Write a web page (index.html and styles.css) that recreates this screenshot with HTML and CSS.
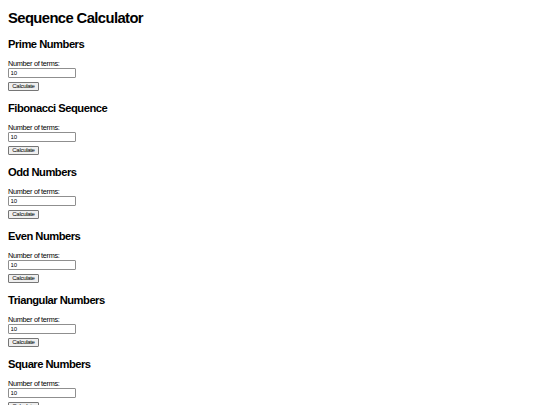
FILE: index.html
```html
<!DOCTYPE html>
<html lang="en">
<head>
<meta charset="utf-8">
<title>Sequence Calculator</title>
<link rel="stylesheet" href="styles.css">
</head>
<body>
<h1 class="title">Sequence Calculator</h1>
<div class="section">
  <h2 class="heading">Prime Numbers</h2>
  <label class="label">Number of terms:</label>
  <input class="field" type="number" value="10">
  <button class="btn">Calculate</button>
</div>
<div class="section">
  <h2 class="heading">Fibonacci Sequence</h2>
  <label class="label">Number of terms:</label>
  <input class="field" type="number" value="10">
  <button class="btn">Calculate</button>
</div>
<div class="section">
  <h2 class="heading">Odd Numbers</h2>
  <label class="label">Number of terms:</label>
  <input class="field" type="number" value="10">
  <button class="btn">Calculate</button>
</div>
<div class="section">
  <h2 class="heading">Even Numbers</h2>
  <label class="label">Number of terms:</label>
  <input class="field" type="number" value="10">
  <button class="btn">Calculate</button>
</div>
<div class="section">
  <h2 class="heading">Triangular Numbers</h2>
  <label class="label">Number of terms:</label>
  <input class="field" type="number" value="10">
  <button class="btn">Calculate</button>
</div>
<div class="section">
  <h2 class="heading">Square Numbers</h2>
  <label class="label">Number of terms:</label>
  <input class="field" type="number" value="10">
  <button class="btn">Calculate</button>
</div>
</body>
</html>
```
FILE: styles.css
```css
html, body {
  margin: 0;
  padding: 0;
  background: #fff;
}
body {
  padding: 0 8px;
  font-family: "Liberation Sans", Arial, sans-serif;
  color: #000;
  overflow: hidden;
}
.title {
  font-size: 14.8px;
  font-weight: bold;
  line-height: 16.5px;
  letter-spacing: -0.6px;
  margin: 10px 0 11.3px;
}
.section {
  display: block;
}
.heading {
  font-size: 11.2px;
  font-weight: bold;
  line-height: 12.6px;
  letter-spacing: -0.5px;
  margin: 11.2px 0 10px;
}
.label {
  display: block;
  font-size: 7.3px;
  line-height: 7.2px;
  letter-spacing: -0.3px;
}
.field {
  display: block;
  box-sizing: border-box;
  width: 68px;
  height: 10px;
  margin: 0;
  padding: 0 1.5px;
  font-family: "Liberation Sans", Arial, sans-serif;
  font-size: 6px;
  letter-spacing: -0.2px;
  color: #000;
  border: 1px solid #8f8f8f;
  border-radius: 1px;
  background: #fff;
  -moz-appearance: textfield;
  appearance: textfield;
}
.field::-webkit-inner-spin-button,
.field::-webkit-outer-spin-button {
  -webkit-appearance: none;
  margin: 0;
}
.btn {
  display: block;
  box-sizing: border-box;
  margin: 4px 0 0;
  width: 31px;
  height: 9px;
  padding: 0;
  font-family: "Liberation Sans", Arial, sans-serif;
  font-size: 6px;
  line-height: 7px;
  letter-spacing: -0.3px;
  color: #000;
  background: #efefef;
  border: 1px solid #767676;
  border-radius: 1px;
}
```
